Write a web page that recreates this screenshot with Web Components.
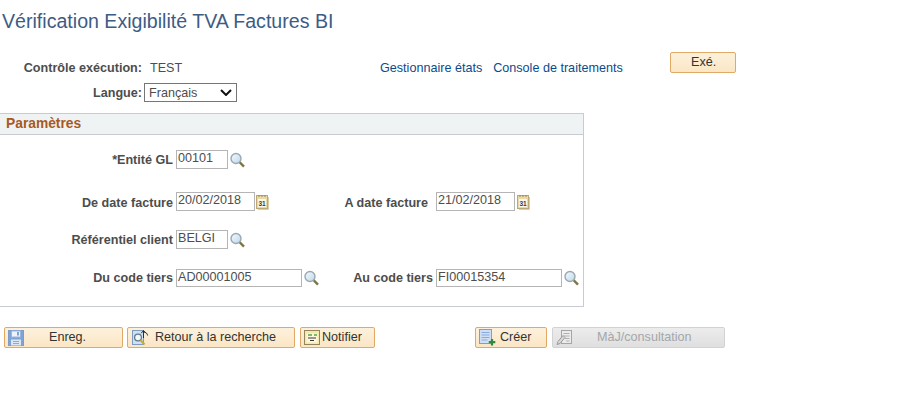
<!doctype html>
<html>
<head>
<title>Vérification Exigibilité TVA Factures BI</title>
<style>
    html, body { margin: 0; background: #fff; }
    body { font-family: "Liberation Sans", Arial, sans-serif; font-size: 12.6px; color: #444; }
</style>
</head>
<body>
<template id="ps-page-tpl">
    <style>
        :host { display: block; width: 908px; height: 404px; overflow: hidden; }
        .title { margin: 0; padding: 10px 0 0 2px; height: 22px; font: 400 19.6px/22px "Liberation Sans", Arial, sans-serif; color: #3d5c85; white-space: nowrap; }
        .head { display: grid; grid-template-columns: 142px 96px 142px 244px 46px 66px; grid-template-rows: 31px 19px; margin-top: 20px; height: 61px; }
        .lab { font-weight: 700; color: #4d4d4d; text-align: right; align-self: center; white-space: nowrap; }
        .val { padding-left: 8px; color: #4d4d4d; align-self: center; }
        .links { grid-column: 4; display: flex; gap: 11px; align-self: center; }
        .run { grid-column: 6; grid-row: 1; align-self: start; display: flex; }
        .lang { grid-column: 2 / 4; grid-row: 2; align-self: center; padding-left: 2px; display: flex; }
    </style>
    <h1 class="title"><slot name="title"></slot></h1>
    <div class="head">
        <span class="lab">Contrôle exécution:</span>
        <span class="val">TEST</span>
        <span></span>
        <div class="links"><slot name="links"></slot></div>
        <span></span>
        <div class="run"><slot name="run"></slot></div>
        <span class="lab">Langue:</span>
        <div class="lang"><slot name="lang"></slot></div>
    </div>
    <slot></slot>
</template>

<template id="ps-link-tpl">
    <style>
        :host { display: inline-block; color: #0b4a8c; white-space: nowrap; }
    </style>
    <slot></slot>
</template>

<template id="ps-select-tpl">
    <style>
        :host { display: inline-flex; align-items: center; justify-content: space-between; box-sizing: border-box; width: 93px; height: 19px; border: 1px solid #767676; padding: 0 4px 0 4px; background: #fff; color: #4d4d4d; }
        svg { display: block; }
    </style>
    <slot></slot>
    <svg width="12" height="7" viewBox="0 0 12 7"><path d="M1 1l5 5 5-5" fill="none" stroke="#111" stroke-width="2"/></svg>
</template>

<template id="ps-panel-tpl">
    <style>
        :host { display: block; box-sizing: border-box; width: 584px; height: 194px; border-right: 1px solid #c6ccd1; border-bottom: 1px solid #c6ccd1; }
        .bar { box-sizing: border-box; height: 22px; padding-left: 6px; background: #eff3f4; border-top: 1px solid #c6ccd1; border-bottom: 1px solid #c6ccd1; font: 700 13.8px/19px "Liberation Sans", Arial, sans-serif; color: #a85a1c; }
        .body { display: grid; grid-template-columns: 173px 165px 95px 1fr; grid-template-rows: 42px 38px 38px 19px; align-items: start; padding-top: 15px; }
    </style>
    <div class="bar"><slot name="heading"></slot></div>
    <div class="body"><slot></slot></div>
</template>

<template id="ps-field-tpl">
    <style>
        :host { display: flex; align-items: center; height: 19px; }
        .inp { box-sizing: border-box; height: var(--h, 19px); width: var(--w, 52px); margin-left: 3px; padding: 0 1px 1px 1px; border: 1px solid #b5b5b5; line-height: 14px; color: #4d4d4d; white-space: nowrap; overflow: hidden; }
        .icon { display: flex; margin-left: var(--gap, 2px); }
    </style>
    <span class="inp"><slot></slot></span>
    <span class="icon"><slot name="icon"></slot></span>
</template>

<template id="ps-label-tpl">
    <style>
        :host { display: block; font-weight: 700; line-height: var(--lh, 20px); color: #4d4d4d; text-align: right; white-space: nowrap; }
    </style>
    <slot></slot>
</template>

<template id="ps-lookup-tpl">
    <style>
        :host { display: block; width: 15px; height: 16px; }
        svg { display: block; }
    </style>
    <svg width="15" height="16" viewBox="0 0 15 16">
        <defs><linearGradient id="g" x1="0" y1="0" x2="1" y2="1"><stop offset="0" stop-color="#f5fafd"/><stop offset="1" stop-color="#bdd7ea"/></linearGradient></defs>
        <circle cx="6" cy="6.5" r="5" fill="url(#g)" stroke="#9aa9b1" stroke-width="1.4"/>
        <path d="M9.8 10.4l4.2 4.3" stroke="#7f7846" stroke-width="2.4"/>
    </svg>
</template>

<template id="ps-calendar-tpl">
    <style>
        :host { display: block; width: 14px; height: 16px; }
        svg { display: block; }
    </style>
    <svg width="14" height="16" viewBox="0 0 14 16">
        <rect x=".5" y="1.5" width="11" height="13" fill="#e9d9a8" stroke="#bda873"/>
        <path d="M12.5 3v12.5H2" fill="none" stroke="#dccfa6"/>
        <path d="M3 1v2M6 1v2M9 1v2" stroke="#9a8650" stroke-width="1"/>
        <rect x="2" y="5" width="8" height="8" fill="#fbf8ea"/>
        <text x="6" y="12" font-family="Liberation Sans, sans-serif" font-size="6.5" font-weight="700" text-anchor="middle" fill="#3a3a3a">31</text>
    </svg>
</template>

<template id="ps-button-tpl">
    <style>
        :host { display: inline-flex; flex: none; align-items: center; box-sizing: border-box; height: 21px; border: 1px solid #e0a966; border-radius: 2px; background: linear-gradient(#fdf1dc, #fbe6c5); color: #333; white-space: nowrap; }
        :host([disabled]) { border-color: #d2d2d2; background: linear-gradient(#ececec, #dfdfdf); color: #a3a7ab; }
        .ic { display: flex; flex: none; margin-left: 3px; width: var(--ic, 16px); }
        .tx { flex: 1; padding-bottom: 1px; }
    </style>
    <span class="ic"><slot name="icon"></slot></span>
    <span class="tx"><slot></slot></span>
</template>

<template id="ps-toolbar-tpl">
    <style>
        :host { display: flex; align-items: center; padding: 20px 0 0 4px; gap: 5px; }
    </style>
    <slot></slot>
</template>

<ps-page>
    <span slot="title">Vérification Exigibilité TVA Factures BI</span>
    <ps-link slot="links">Gestionnaire états</ps-link>
    <ps-link slot="links">Console de traitements</ps-link>
    <ps-button slot="run" style="width:66px;--ic:17px">Exé.</ps-button>
    <ps-select slot="lang">Français</ps-select>

    <ps-panel>
        <span slot="heading">Paramètres</span>
        <ps-label>*Entité GL</ps-label>
        <ps-field>00101<ps-lookup slot="icon"></ps-lookup></ps-field>
        <span></span><span></span>

        <ps-label style="--lh:22px">De date facture</ps-label>
        <ps-field style="--w:79px;--gap:1px">20/02/2018<ps-calendar slot="icon"></ps-calendar></ps-field>
        <ps-label style="padding-right:5px;--lh:23px">A date facture</ps-label>
        <ps-field style="--w:79px;--gap:2px">21/02/2018<ps-calendar slot="icon"></ps-calendar></ps-field>

        <ps-label>Référentiel client</ps-label>
        <ps-field>BELGI<ps-lookup slot="icon"></ps-lookup></ps-field>
        <span></span><span></span>

        <ps-label>Du code tiers</ps-label>
        <ps-field style="--w:126px;--h:18px">AD00001005<ps-lookup slot="icon"></ps-lookup></ps-field>
        <ps-label>Au code tiers</ps-label>
        <ps-field style="--w:126px;--h:18px">FI00015354<ps-lookup slot="icon"></ps-lookup></ps-field>
    </ps-panel>

    <ps-toolbar>
        <ps-button style="width:119px;--ic:41px">
            <svg slot="icon" width="16" height="16" viewBox="0 0 16 16"><rect x=".5" y=".5" width="15" height="15" fill="#7fa3d8" stroke="#7d9cc8"/><rect x="3.5" y="1" width="9" height="6" fill="#eef3fa" stroke="#9db6da"/><rect x="9" y="2" width="2" height="3.5" fill="#7fa3d8"/><rect x="3" y="9.5" width="10" height="6" fill="#dbe6f5"/><path d="M5 11.5h6M5 13.5h6" stroke="#8fabd3"/></svg>
            Enreg.
        </ps-button>
        <ps-button style="width:168px;--ic:24px;margin-left:-1px">
            <svg slot="icon" width="18" height="17" viewBox="0 0 18 17"><rect x="1.5" y="1.5" width="11" height="14" fill="#cfdff2" stroke="#7e9cc0"/><circle cx="7" cy="8.5" r="3.4" fill="#f4f8fb" stroke="#63798c" stroke-width="1.3"/><path d="M9.5 11l4 4.5" stroke="#c9a92e" stroke-width="2"/><path d="M12.5 9V2M10.2 4.2L12.5 1.5l2.3 2.7M13 3c2 .2 3.3 1.5 3.6 3.5" fill="none" stroke="#26303a"/></svg>
            Retour à la recherche
        </ps-button>
        <ps-button style="width:75px;--ic:18px">
            <svg slot="icon" width="16" height="15" viewBox="0 0 16 15"><rect x=".5" y=".5" width="15" height="14" fill="#f6e7ae" stroke="#94855a"/><path d="M2.5 3.5h11v9h-11z" fill="#fbf6de"/><path d="M4 5h4M10 5h3" stroke="#58a548" stroke-width="1.4"/><path d="M4 8h8M6 10.5h4" stroke="#3a3a32"/></svg>
            Notifier
        </ps-button>
        <span style="width:90px"></span>
        <ps-button style="width:72px;--ic:21px">
            <svg slot="icon" width="17" height="17" viewBox="0 0 17 17"><rect x=".5" y=".5" width="12" height="14" fill="#cfe0f5" stroke="#7d9fd0"/><path d="M2.5 3.5h8M2.5 6h8M2.5 8.5h8M2.5 11h6" stroke="#8aa9dc"/><path d="M13 10v6.5M9.8 13.2h6.5" stroke="#2e8b3a" stroke-width="2.2"/></svg>
            Créer
        </ps-button>
        <ps-button disabled style="width:173px;--ic:41px">
            <svg slot="icon" width="17" height="17" viewBox="0 0 17 17"><rect x="5.5" y="1.5" width="10" height="13" fill="#ececec" stroke="#a5a5a5"/><path d="M7.5 4.5h6M7.5 7h6M9 9.5h4.5M10 12h3.5" stroke="#b0b0b0"/><path d="M1 15.5l1-3 5-6 2 2-5 6z" fill="#d8d8d8" stroke="#9a9a9a"/></svg>
            MàJ/consultation
        </ps-button>
    </ps-toolbar>
</ps-page>

<script>
    function define(name, tplId) {
        customElements.define(name, class extends HTMLElement {
            constructor() {
                super();
                const template = document.querySelector(tplId);
                this.attachShadow({ mode: 'open' });
                this.shadowRoot.appendChild(template.content.cloneNode(true));
            }
        });
    }
    define('ps-page', '#ps-page-tpl');
    define('ps-link', '#ps-link-tpl');
    define('ps-select', '#ps-select-tpl');
    define('ps-panel', '#ps-panel-tpl');
    define('ps-field', '#ps-field-tpl');
    define('ps-label', '#ps-label-tpl');
    define('ps-lookup', '#ps-lookup-tpl');
    define('ps-calendar', '#ps-calendar-tpl');
    define('ps-button', '#ps-button-tpl');
    define('ps-toolbar', '#ps-toolbar-tpl');
</script>
</body>
</html>
